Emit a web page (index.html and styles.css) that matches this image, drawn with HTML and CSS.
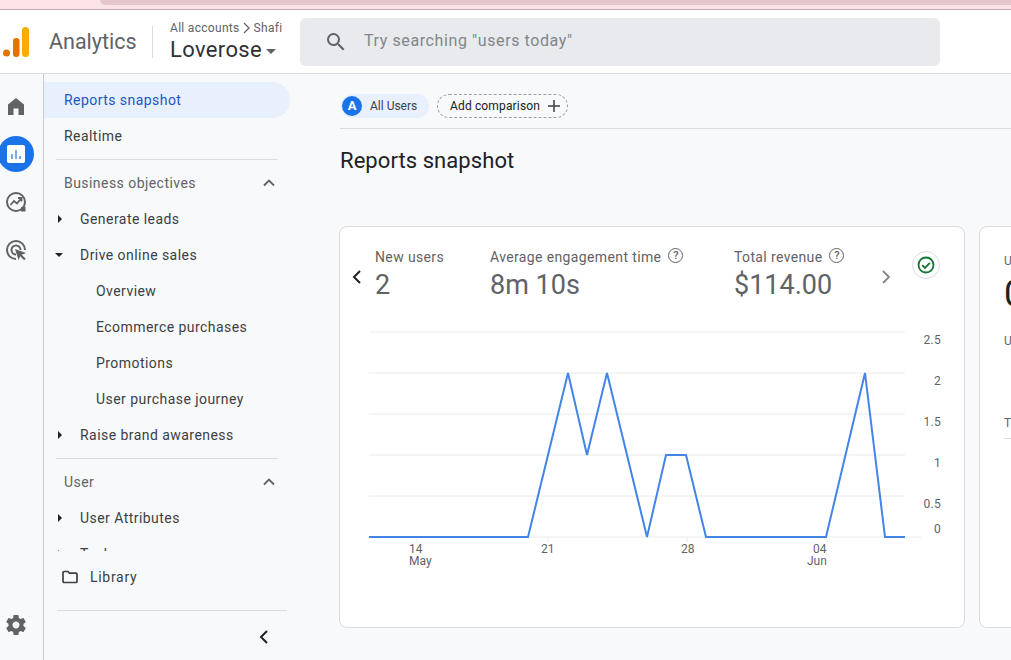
FILE: index.html
```html
<!DOCTYPE html>
<html lang="en">
<head>
<meta charset="utf-8">
<title>Analytics - Reports snapshot</title>
<link rel="stylesheet" href="styles.css">
</head>
<body>
<div class="browser-strip"><div class="browser-tab"></div></div>
<header class="topbar">
  <svg class="logo" viewBox="0 0 30 32" width="30" height="32" aria-hidden="true">
    <circle cx="6.500" cy="26" r="3.500" fill="#e37400"/>
    <rect x="13" y="11" width="6.500" height="19" rx="3.200" fill="#e37400"/>
    <rect x="22" y="0" width="7" height="30" rx="3.500" fill="#f9ab00"/>
  </svg>
  <span class="product">Analytics</span>
  <span class="top-sep"></span>
  <div class="account">
    <div class="crumbs">All accounts
      <svg viewBox="0 0 8 12" width="8" height="12" aria-hidden="true"><path d="M1 1l5 5-5 5" fill="none" stroke="#5f6368" stroke-width="1.300"/></svg>
      Shafi</div>
    <div class="property">Loverose <span class="caret"></span></div>
  </div>
  <div class="search">
    <svg viewBox="0 0 24 24" width="24" height="24" aria-hidden="true"><path fill="#5f6368" d="M15.500 14h-.79l-.28-.27A6.470 6.470 0 0 0 16 9.500 6.500 6.500 0 1 0 9.500 16c1.610 0 3.090-.59 4.230-1.570l.27.28v.79l5 4.990L20.490 19l-4.990-5zm-6 0C7.010 14 5 11.990 5 9.500S7.010 5 9.500 5 14 7.010 14 9.500 11.990 14 9.500 14z"/></svg>
    <span class="search-text">Try searching "users today"</span>
  </div>
</header>
<div class="body">
  <aside class="rail">
    <div class="rail-item">
      <svg viewBox="0 0 24 24" width="24" height="24" aria-hidden="true"><path fill="#5f6368" d="M4 21V10.500L12 4l8 6.500V21h-5.500v-6.500h-5V21z"/></svg>
    </div>
    <div class="rail-item">
      <span class="rail-active">
        <svg viewBox="0 0 18 18" width="18" height="18" aria-hidden="true"><rect width="18" height="18" rx="2" fill="#fff"/><path d="M5 9v5M9 5v9M13 11v3" stroke="#1a73e8" stroke-width="1.200"/></svg>
      </span>
    </div>
    <div class="rail-item">
      <svg viewBox="0 0 24 24" width="24" height="24" aria-hidden="true"><circle cx="12" cy="12" r="9" fill="none" stroke="#5f6368" stroke-width="2"/><path d="M6.500 15l3.500-4 3 2.500L17.500 8M14 8h3.500v3.500" fill="none" stroke="#5f6368" stroke-width="1.800"/><path d="M17 17h4.500v4.500H17z" fill="#5f6368"/></svg>
    </div>
    <div class="rail-item">
      <svg viewBox="0 0 24 24" width="24" height="24" aria-hidden="true"><path d="M12 21a9 9 0 1 1 9-9" fill="none" stroke="#5f6368" stroke-width="2"/><path d="M12 16.500a4.500 4.500 0 1 1 4.500-4.500" fill="none" stroke="#5f6368" stroke-width="2"/><path d="M11 11l11 4-4.300 1.700 4 4-1.500 1.500-4-4L14.500 22z" fill="#5f6368"/></svg>
    </div>
    <div class="rail-gear">
      <svg viewBox="0 0 24 24" width="24" height="24" aria-hidden="true"><path fill="#5f6368" d="M19.430 12.980c.04-.32.070-.64.070-.98s-.03-.66-.07-.98l2.110-1.650c.19-.15.240-.42.120-.64l-2-3.460c-.12-.22-.39-.3-.61-.22l-2.490 1c-.52-.4-1.080-.73-1.690-.98l-.38-2.650A.488.488 0 0 0 14 2h-4c-.25 0-.46.180-.49.420l-.38 2.650c-.61.250-1.170.590-1.690.98l-2.490-1a.566.566 0 0 0-.18-.030c-.17 0-.34.090-.43.250l-2 3.460c-.13.220-.07.490.12.640l2.110 1.650c-.04.320-.07.650-.07.980s.03.660.07.980l-2.110 1.650c-.19.150-.24.420-.12.640l2 3.460c.12.220.39.300.61.220l2.490-1c.52.400 1.080.730 1.690.980l.38 2.650c.03.240.24.420.49.420h4c.25 0 .46-.18.490-.42l.38-2.650c.61-.25 1.170-.59 1.690-.98l2.490 1c.06.020.12.030.18.030.17 0 .34-.09.430-.25l2-3.460c.12-.22.070-.49-.12-.64l-2.110-1.650zM12 15.500c-1.930 0-3.500-1.570-3.500-3.500s1.570-3.500 3.500-3.500 3.500 1.570 3.500 3.500-1.570 3.500-3.500 3.500z"/></svg>
    </div>
  </aside>
  <nav class="nav">
    <div class="nav-scroll">
      <a class="nav-row selected">Reports snapshot</a>
      <a class="nav-row">Realtime</a>
      <div class="nav-rule"></div>
      <div class="nav-row section">Business objectives
        <svg class="chev-up" viewBox="0 0 12 8" width="12" height="8" aria-hidden="true"><path d="M1 6.500l5-5 5 5" fill="none" stroke="#5f6368" stroke-width="1.800"/></svg>
      </div>
      <a class="nav-row child"><span class="tri-right"></span>Generate leads</a>
      <a class="nav-row child"><span class="tri-down"></span>Drive online sales</a>
      <a class="nav-row grandchild">Overview</a>
      <a class="nav-row grandchild">Ecommerce purchases</a>
      <a class="nav-row grandchild">Promotions</a>
      <a class="nav-row grandchild">User purchase journey</a>
      <a class="nav-row child"><span class="tri-right"></span>Raise brand awareness</a>
      <div class="nav-rule"></div>
      <div class="nav-row section">User
        <svg class="chev-up" viewBox="0 0 12 8" width="12" height="8" aria-hidden="true"><path d="M1 6.500l5-5 5 5" fill="none" stroke="#5f6368" stroke-width="1.800"/></svg>
      </div>
      <a class="nav-row child"><span class="tri-right"></span>User Attributes</a>
      <a class="nav-row child"><span class="tri-right"></span>Tech</a>
    </div>
    <a class="library">
      <svg viewBox="0 0 16 14" width="16" height="14" aria-hidden="true"><path d="M1 2.500a1 1 0 0 1 1-1h4l1.500 1.700H14a1 1 0 0 1 1 1v7.300a1 1 0 0 1-1 1H2a1 1 0 0 1-1-1z" fill="none" stroke="#3c4043" stroke-width="1.700"/></svg>
      Library
    </a>
    <div class="nav-foot-rule"></div>
    <div class="collapse">
      <svg viewBox="0 0 10 16" width="10" height="16" aria-hidden="true"><path d="M8 2L2 8l6 6" fill="none" stroke="#202124" stroke-width="2"/></svg>
    </div>
  </nav>
  <main class="main">
    <div class="chips">
      <div class="chip-user"><span class="avatar">A</span>All Users</div>
      <div class="chip-add">Add comparison
        <svg viewBox="0 0 14 14" width="14" height="14" aria-hidden="true"><path d="M7 1v12M1 7h12" stroke="#3c4043" stroke-width="1.500"/></svg>
      </div>
    </div>
    <h1 class="title">Reports snapshot</h1>
    <div class="cards">
      <section class="card card-main">
        <div class="metrics">
          <svg class="metric-prev" viewBox="0 0 10 16" width="10" height="16" aria-hidden="true"><path d="M8 2L2 8l6 6" fill="none" stroke="#202124" stroke-width="2"/></svg>
          <div class="metric m-users"><div class="metric-label">New users</div><div class="metric-value">2</div></div>
          <div class="metric m-time"><div class="metric-label">Average engagement time <span class="help">?</span></div><div class="metric-value">8m 10s</div></div>
          <div class="metric m-rev"><div class="metric-label">Total revenue <span class="help">?</span></div><div class="metric-value">$114.00</div></div>
          <svg class="metric-next" viewBox="0 0 10 16" width="10" height="16" aria-hidden="true"><path d="M2 2l6 6-6 6" fill="none" stroke="#80868b" stroke-width="1.800"/></svg>
          <span class="status">
            <svg viewBox="0 0 18 18" width="18" height="18" aria-hidden="true"><circle cx="9" cy="9" r="7.500" fill="none" stroke="#137333" stroke-width="1.800"/><path d="M5.200 9.200l2.700 2.700 5-5" fill="none" stroke="#137333" stroke-width="1.800"/></svg>
          </span>
        </div>
        <svg class="chart" viewBox="0 0 624 250" width="624" height="250" aria-label="New users line chart">
          <g class="grid">
            <path d="M29 10H565M29 51H565M29 92H565M29 133H565M29 174H565M29 215H581"/>
            <path d="M77 215v5M208 215v5M347 215v5M487 215v5"/>
          </g>
          <g class="y-labels">
            <text x="601" y="22">2.5</text>
            <text x="601" y="63">2</text>
            <text x="601" y="104">1.5</text>
            <text x="601" y="145">1</text>
            <text x="601" y="186">0.5</text>
            <text x="601" y="211">0</text>
          </g>
          <g class="x-labels">
            <text x="69" y="231">14</text>
            <text x="69" y="243">May</text>
            <text x="201" y="231">21</text>
            <text x="341" y="231">28</text>
            <text x="473" y="231">04</text>
            <text x="467" y="243">Jun</text>
          </g>
          <polyline class="line" points="29,215 188,215 228,51 247,133 267,51 307,215 326,133 346,133 366,215 486,215 525,51 545,215 565,215"/>
        </svg>
      </section>
      <section class="card card-side">
        <div class="side-a">U</div>
        <div class="side-big">0</div>
        <div class="side-b">U</div>
        <div class="side-c">T</div>
        <div class="side-rule"></div>
      </section>
    </div>
  </main>
</div>
</body>
</html>
```
FILE: styles.css
```css
* { box-sizing: border-box; }
html, body { margin: 0; height: 100%; overflow: hidden; }
body {
  width: 1011px;
  height: 660px;
  background: #f8f9fb;
  font-family: Roboto, "Liberation Sans", sans-serif;
  color: #202124;
  display: flex;
  flex-direction: column;
}
.browser-strip {
  height: 10px;
  flex: none;
  background: #fbe3e7;
  border-bottom: 1px solid #c9a9af;
  padding-left: 100px;
}
.browser-tab {
  height: 5px;
  background: #e5c6cb;
  border-bottom-left-radius: 6px;
}
.topbar {
  height: 64px;
  flex: none;
  background: #fff;
  border-bottom: 1px solid #dadce0;
  display: flex;
  align-items: center;
}
.logo { flex: none; margin-top: 3px; }
.product { font-size: 21.500px; color: #5f6368; margin-left: 19px; width: 87px; white-space: nowrap; }
.top-sep { width: 1px; height: 32px; background: #dadce0; margin-left: 16px; }
.account { margin-left: 17px; width: 130px; height: 48px; flex: none; }
.crumbs { font-size: 12px; color: #5f6368; letter-spacing: .3px; display: flex; align-items: center; gap: 3px; height: 21px; white-space: nowrap; }
.property { font-size: 22px; letter-spacing: .35px; color: #303134; height: 22px; line-height: 22px; white-space: nowrap; display: flex; align-items: center; }
.caret { width: 0; height: 0; margin-left: 4px; margin-top: 3px; border: 5px solid transparent; border-top-color: #5f6368; border-bottom: 0; }
.search {
  width: 640px;
  height: 48px;
  background: #e9eaed;
  border-radius: 6px;
  display: flex;
  align-items: center;
  padding-left: 24px;
  gap: 16px;
  color: #80868b;
  font-size: 16px;
  letter-spacing: .6px;
  margin-top: 1px;
}
.search-text { margin-bottom: 3px; }
.body { flex: 1; display: flex; min-height: 0; }
.rail {
  width: 44px;
  flex: none;
  border-right: 1px solid #c8cacd;
  background: #f8f9fb;
  padding-top: 8px;
  display: flex;
  flex-direction: column;
  align-items: flex-start;
}
.rail-item { width: 32px; height: 48px; display: flex; align-items: center; justify-content: center; flex: none; }
.rail-active { width: 36px; height: 36px; flex: none; border-radius: 50%; background: #1a73e8; display: flex; align-items: center; justify-content: center; }
.rail-gear { width: 32px; margin-top: auto; height: 24px; margin-bottom: 23px; display: flex; justify-content: center; }
.nav { width: 247px; flex: none; display: flex; flex-direction: column; padding-top: 8px; }
.nav-scroll { height: 469px; overflow: hidden; flex: none; }
.nav-row { height: 36px; display: flex; align-items: center; padding-left: 20px; font-size: 14px; letter-spacing: .45px; color: #3c4043; white-space: nowrap; }
.selected { background: #e8f0fe; color: #1a56c4; border-radius: 0 18px 18px 0; width: 246px; }
.nav-rule { height: 1px; background: #dadce0; margin: 5px 12px 5px 12px; width: 222px; }
.section { color: #5f6368; justify-content: space-between; padding-right: 15px; width: 246px; }
.child { padding-left: 0; }
.child span { margin-left: 14px; margin-right: 18px; width: 3px; }
.tri-right { width: 0; height: 0; border-left: 4px solid #202124; border-top: 4px solid transparent; border-bottom: 4px solid transparent; box-sizing: content-box; }
.child .tri-right { width: 0; }
.child .tri-down { width: 0; margin-left: 11px; margin-right: 17px; height: 0; border-top: 4px solid #202124; border-left: 4px solid transparent; border-right: 4px solid transparent; }
.grandchild { padding-left: 52px; }
.library { display: flex; align-items: center; gap: 12px; height: 36px; margin-top: 8px; padding-left: 18px; font-size: 14px; letter-spacing: .7px; color: #3c4043; }
.nav-foot-rule { height: 1px; background: #dadce0; width: 230px; margin: 15px 0 0 13px; }
.collapse { display: flex; justify-content: flex-end; padding: 18px 22px 0 0; }
.main { flex: 1; min-width: 0; padding: 20px 0 0 49px; overflow: hidden; }
.chips { display: flex; align-items: center; gap: 8px; height: 35px; border-bottom: 1px solid #dadce0; padding: 0 0 11px 1px; font-size: 12px; color: #3c4043; }
.chip-user { display: flex; align-items: center; gap: 8px; height: 24px; width: 88px; border-radius: 12px; background: #e8f0fe; padding-left: 1px; }
.avatar { width: 20px; height: 20px; border-radius: 50%; background: #1a73e8; color: #fff; font-weight: 700; font-size: 13px; display: flex; align-items: center; justify-content: center; }
.chip-add { display: flex; align-items: center; gap: 7px; height: 24px; width: 131px; border: 1px dashed #9aa0a6; border-radius: 12px; padding-left: 12px; color: #202124; letter-spacing: .15px; white-space: nowrap; }
.title { margin: 0; font-size: 22px; font-weight: 400; letter-spacing: .07px; line-height: 30px; padding-top: 17px; height: 97px; color: #202124; }
.cards { display: flex; gap: 14px; width: 800px; margin-left: -1px; }
.card { height: 402px; background: #fff; border: 1px solid #dadce0; border-radius: 8px; flex: none; }
.card-main { width: 626px; }
.card-side { width: 200px; padding: 27px 0 0 24px; font-size: 12px; color: #5f6368; }
.side-a { height: 14px; line-height: 14px; }
.side-big { font-size: 36px; color: #202124; height: 59px; line-height: 44px; margin-top: 4px; }
.side-b { height: 14px; line-height: 14px; margin-top: 3px; }
.side-c { height: 14px; line-height: 14px; margin-top: 68px; }
.side-rule { height: 1px; background: #dadce0; margin-top: 8px; }
.metrics { height: 95px; display: flex; align-items: flex-start; position: relative; padding-top: 20px; }
.metric-prev { position: absolute; left: 12px; top: 42px; }
.metric-next { position: absolute; left: 541px; top: 42px; }
.metric-label { font-size: 14px; letter-spacing: .37px; color: #5f6368; height: 20px; line-height: 20px; white-space: nowrap; display: flex; align-items: center; gap: 7px; }
.metric-value { font-size: 27px; color: #5f6368; line-height: 34px; height: 34px; margin-top: 1px; }
.m-users { margin-left: 35px; width: 115px; }
.m-time { width: 244px; }
.m-rev { width: 150px; }
.help { width: 15px; height: 15px; border: 1.500px solid #5f6368; border-radius: 50%; display: inline-flex; align-items: center; justify-content: center; font-size: 11px; font-weight: 500; letter-spacing: 0; margin-top: -3px; }
.status { position: absolute; left: 572px; top: 24px; width: 28px; height: 28px; border: 1px solid #dadce0; border-radius: 50%; display: flex; align-items: center; justify-content: center; }
.chart { display: block; }
.grid path { stroke: #e8eaed; stroke-width: 1; fill: none; }
.y-labels text { font-size: 12px; fill: #5f6368; text-anchor: end; letter-spacing: .3px; }
.x-labels text { font-size: 12px; fill: #5f6368; }
.line { fill: none; stroke: #4285e6; stroke-width: 2; stroke-linejoin: miter; }
```
